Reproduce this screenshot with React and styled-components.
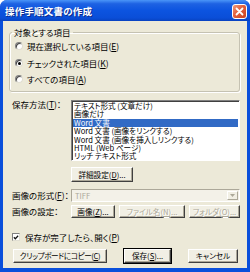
import React from 'react'
import styled, { createGlobalStyle } from 'styled-components';

const GlobalStyle = createGlobalStyle`
    html, body {
        margin: 0;
        padding: 0;
        background: #ffffff;
    }
    * { box-sizing: border-box; }
`;

const listItems = [
    'テキスト形式 (文章だけ)',
    '画像だけ',
    'Word 文書',
    'Word 文書 (画像をリンクする)',
    'Word 文書 (画像を挿入しリンクする)',
    'HTML (Web ページ)',
    'リッチ テキスト形式',
];

const Mn = ({ k }) => <>(<u>{k}</u>)</>;

const App = () => {
    return (
        <>
            <GlobalStyle />
            <Frame>
                <TitleBar>
                    <Title>操作手順文書の作成</Title>
                    <CloseButton>
                        <svg width="9" height="9" viewBox="0 0 9 9">
                            <path d="M1.5 1.5 L7.5 7.5 M7.5 1.5 L1.5 7.5" stroke="#fff" strokeWidth="1.8" strokeLinecap="round" />
                        </svg>
                    </CloseButton>
                </TitleBar>
                <Body>
                    <Group>
                        <Legend>対象とする項目</Legend>
                        <RadioRow><Radio /><span>現在選択している項目<Mn k="E" /></span></RadioRow>
                        <RadioRow><Radio checked /><span>チェックされた項目<Mn k="K" /></span></RadioRow>
                        <RadioRow><Radio /><span>すべての項目<Mn k="A" /></span></RadioRow>
                    </Group>

                    <FieldRow $top={8}>
                        <Label>保存方法<Mn k="T" />：</Label>
                        <ListBox>
                            {listItems.map((item, i) => (
                                <ListItem key={item} $selected={i === 2}>{item}</ListItem>
                            ))}
                        </ListBox>
                    </FieldRow>

                    <FieldRow $top={6}>
                        <Label />
                        <Button $w={62} $h={15}>詳細設定<Mn k="D" />...</Button>
                    </FieldRow>

                    <FieldRow $top={7} $center>
                        <Label>画像の形式<Mn k="F" />：</Label>
                        <Combo>
                            <ComboText>TIFF</ComboText>
                            <ComboArrow>
                                <svg width="5" height="3" viewBox="0 0 5 3">
                                    <path d="M0 0 L5 0 L2.5 3 Z" fill="#ACA899" />
                                </svg>
                            </ComboArrow>
                        </Combo>
                    </FieldRow>

                    <FieldRow $top={3} $center>
                        <Label>画像の設定：</Label>
                        <ButtonGroup>
                            <Button $w={44} $h={13}>画像<Mn k="Z" />...</Button>
                            <Button $w={66} $h={13} disabled>ファイル名<Mn k="N" />...</Button>
                            <Button $w={51} $h={13} disabled>フォルダ<Mn k="O" />...</Button>
                        </ButtonGroup>
                    </FieldRow>

                    <CheckRow>
                        <CheckBox>
                            <svg width="7" height="7" viewBox="0 0 7 7">
                                <path d="M1 3.2 L2.7 5 L6 1.5" stroke="#111" strokeWidth="1.4" fill="none" />
                            </svg>
                        </CheckBox>
                        <span>保存が完了したら、開く<Mn k="P" /></span>
                    </CheckRow>

                    <ButtonRow>
                        <Button $w={94} $h={14} $tight>クリップボードにコピー<Mn k="C" /></Button>
                        <Button $w={47} $h={14} $default>保存<Mn k="S" />...</Button>
                        <Button $w={50} $h={14}>キャンセル</Button>
                    </ButtonRow>
                </Body>
            </Frame>
        </>
    )
}

const Frame = styled.div`
    width: 250px;
    height: 272px;
    display: flex;
    flex-direction: column;
    background: #0A4FDB;
    border-radius: 7px 7px 0 0;
    padding: 0 3px 4px 3px;
    font-family: "Noto Sans CJK JP", "Noto Sans", sans-serif;
    font-feature-settings: "palt";
    color: #000;
`;

const TitleBar = styled.div`
    height: 21px;
    margin: 0 -3px;
    padding: 0 3px 0 5px;
    display: flex;
    align-items: center;
    justify-content: space-between;
    border-radius: 7px 7px 0 0;
    background: linear-gradient(#4A95F8 0%, #1E62E3 18%, #0C54E0 50%, #0A4ED8 85%, #0842C0 100%);
`;

const Title = styled.div`
    color: #fff;
    font-size: 9.5px;
    font-weight: bold;
    letter-spacing: 0.2px;
    text-shadow: 1px 1px 0 #0B2A8A;
`;

const CloseButton = styled.div`
    width: 15px;
    height: 15px;
    margin-top: 1px;
    border: 1px solid #ffffff;
    border-radius: 3px;
    background: linear-gradient(135deg, #F09A7C 0%, #E2603D 45%, #C9431F 100%);
    display: flex;
    align-items: center;
    justify-content: center;
`;

const Body = styled.div`
    flex: 1;
    background: #ECE9D8;
    padding: 6px 7px 0 6px;
    font-size: 8.5px;
    line-height: 10px;
`;

const Group = styled.fieldset`
    margin: 0;
    padding: 4px 5px 7px 5px;
    border: 1px solid #C5C2B2;
    border-radius: 3px;
    box-shadow: inset 1px 1px 0 #ffffff, 1px 1px 0 #ffffff;
    display: flex;
    flex-direction: column;
    gap: 6.5px;
`;

const Legend = styled.legend`
    padding: 0 2px;
    margin-left: -3px;
    font-size: 8.5px;
    line-height: 10px;
`;

const RadioRow = styled.div`
    display: flex;
    align-items: center;
    height: 10px;
    white-space: nowrap;
`;

const Radio = styled.span`
    width: 8px;
    height: 8px;
    margin-right: 4px;
    border-radius: 50%;
    background: #fff;
    border: 1px solid;
    border-color: #808080 #E0DED2 #E0DED2 #808080;
    box-shadow: inset 1px 1px 0 #404040;
    position: relative;
    flex-shrink: 0;

    &::after {
        content: "";
        display: ${p => (p.checked ? 'block' : 'none')};
        position: absolute;
        left: 2px;
        top: 2px;
        width: 3px;
        height: 3px;
        border-radius: 50%;
        background: #000;
    }
`;

const FieldRow = styled.div`
    display: flex;
    align-items: ${p => (p.$center ? 'center' : 'flex-start')};
    margin-top: ${p => p.$top}px;
`;

const Label = styled.div`
    width: 62px;
    flex-shrink: 0;
    padding-left: 3px;
    white-space: nowrap;
    line-height: 9px;
`;

const ListBox = styled.div`
    flex: 1;
    height: 61px;
    background: #fff;
    border: 1px solid;
    border-color: #808080 #ffffff #ffffff #808080;
    box-shadow: inset 1px 1px 0 #404040;
    padding: 1px 1px 0 1px;
    overflow: hidden;
`;

const ListItem = styled.div`
    height: 8.4px;
    line-height: 8.4px;
    font-size: 7.6px;
    padding-left: 1px;
    white-space: nowrap;
    background: ${p => (p.$selected ? '#316AC5' : 'transparent')};
    color: ${p => (p.$selected ? '#fff' : '#000')};
`;

const Button = styled.div`
    width: ${p => p.$w}px;
    height: ${p => p.$h}px;
    display: flex;
    align-items: center;
    justify-content: center;
    white-space: nowrap;
    font-size: 7.6px;
    letter-spacing: ${p => (p.$tight ? '-0.4px' : '0')};
    background: #F1EFE4;
    border: 1px solid;
    border-color: #ffffff #404040 #404040 #ffffff;
    box-shadow: inset -1px -1px 0 #ACA899${p => (p.$default ? ', 0 0 0 1px #000' : '')};
    color: ${p => (p.disabled ? '#ACA899' : '#000')};
    text-shadow: ${p => (p.disabled ? '1px 1px 0 #fff' : 'none')};
`;

const ButtonGroup = styled.div`
    display: flex;
    gap: 4px;
`;

const Combo = styled.div`
    flex: 1;
    height: 13px;
    display: flex;
    align-items: center;
    justify-content: space-between;
    background: #F3F1E8;
    border: 1px solid;
    border-color: #ACA899 #ffffff #ffffff #ACA899;
    padding: 0 1px 0 3px;
`;

const ComboText = styled.span`
    color: #ACA899;
    font-size: 7.6px;
`;

const ComboArrow = styled.div`
    width: 11px;
    height: 9px;
    display: flex;
    align-items: center;
    justify-content: center;
    background: #F1EFE4;
    border: 1px solid;
    border-color: #ffffff #ACA899 #ACA899 #ffffff;
`;

const CheckRow = styled.div`
    display: flex;
    align-items: center;
    gap: 5px;
    height: 10px;
    margin-top: 14px;
    padding-left: 3px;
    white-space: nowrap;
`;

const CheckBox = styled.span`
    width: 8px;
    height: 8px;
    background: #fff;
    border: 1px solid;
    border-color: #808080 #E0DED2 #E0DED2 #808080;
    display: flex;
    align-items: center;
    justify-content: center;
`;

const ButtonRow = styled.div`
    display: flex;
    gap: 17px;
    margin-top: 7px;
    padding-left: 4px;
`;

export default App;
